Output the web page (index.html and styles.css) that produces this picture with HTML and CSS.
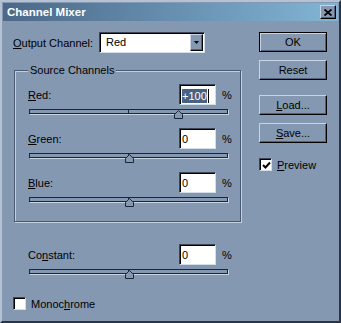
FILE: index.html
```html
<!DOCTYPE html>
<html lang="en">
<head>
    <meta charset="UTF-8">
    <meta name="viewport" content="width=device-width, initial-scale=1.0">
    <title>Channel Mixer</title>
    <link rel="stylesheet" href="styles.css">
</head>
<body>
    <div class="window">
        <div class="titlebar">
            <span class="title">Channel Mixer</span>
            <button class="close">
                <svg width="8" height="7" viewBox="0 0 8 7"><path d="M0.5 0.5 L7.5 6.5 M7.5 0.5 L0.5 6.5" stroke="#000" stroke-width="1.8" fill="none"/></svg>
            </button>
        </div>
        <div class="content">
            <div class="main">
                <div class="output-row">
                    <span class="output-label"><u>O</u>utput Channel:</span>
                    <div class="select">
                        <span class="select-value">Red</span>
                        <span class="select-arrow">
                            <svg width="5" height="3" viewBox="0 0 5 3"><path d="M0 0 H5 L2.5 3 Z" fill="#000"/></svg>
                        </span>
                    </div>
                </div>

                <fieldset class="group">
                    <legend>Source Channels</legend>
                    <div class="channels">
                        <div class="channel">
                            <div class="row">
                                <span class="label"><u>R</u>ed:</span>
                                <span class="num"><span class="selected">+100</span><span class="caret"></span></span>
                                <span class="pct">%</span>
                            </div>
                            <div class="slider">
                                <div class="track"></div>
                                <svg class="thumb" style="left: 75%" width="9" height="9" viewBox="0 0 9 9"><path d="M4.5 0.5 L8.5 4.5 V8.5 H0.5 V4.5 Z" fill="#8598b2" stroke="#1c2634"/></svg>
                            </div>
                        </div>
                        <div class="channel">
                            <div class="row">
                                <span class="label"><u>G</u>reen:</span>
                                <span class="num">0</span>
                                <span class="pct">%</span>
                            </div>
                            <div class="slider">
                                <div class="track"></div>
                                <svg class="thumb" style="left: 50%" width="9" height="9" viewBox="0 0 9 9"><path d="M4.5 0.5 L8.5 4.5 V8.5 H0.5 V4.5 Z" fill="#8598b2" stroke="#1c2634"/></svg>
                            </div>
                        </div>
                        <div class="channel">
                            <div class="row">
                                <span class="label"><u>B</u>lue:</span>
                                <span class="num">0</span>
                                <span class="pct">%</span>
                            </div>
                            <div class="slider">
                                <div class="track"></div>
                                <svg class="thumb" style="left: 50%" width="9" height="9" viewBox="0 0 9 9"><path d="M4.5 0.5 L8.5 4.5 V8.5 H0.5 V4.5 Z" fill="#8598b2" stroke="#1c2634"/></svg>
                            </div>
                        </div>
                    </div>
                </fieldset>

                <div class="channel constant">
                    <div class="row">
                        <span class="label">Co<u>n</u>stant:</span>
                        <span class="num">0</span>
                        <span class="pct">%</span>
                    </div>
                    <div class="slider">
                        <div class="track"></div>
                        <svg class="thumb" style="left: 50%" width="9" height="9" viewBox="0 0 9 9"><path d="M4.5 0.5 L8.5 4.5 V8.5 H0.5 V4.5 Z" fill="#8598b2" stroke="#1c2634"/></svg>
                    </div>
                </div>

                <div class="check mono">
                    <span class="box"></span>
                    <span>Monoc<u>h</u>rome</span>
                </div>
            </div>

            <div class="side">
                <button class="btn default">OK</button>
                <button class="btn reset">Reset</button>
                <button class="btn load"><u>L</u>oad...</button>
                <button class="btn save"><u>S</u>ave...</button>
                <div class="check preview">
                    <span class="box">
                        <svg width="9" height="9" viewBox="0 0 9 9"><path d="M1 4 L3.5 6.5 L8 1.5" stroke="#000" stroke-width="2" fill="none"/></svg>
                    </span>
                    <span><u>P</u>review</span>
                </div>
            </div>
        </div>
    </div>
</body>
</html>
```

FILE: styles.css
```css
body {
    margin: 0;
    font-family: "Liberation Sans", Arial, sans-serif;
    font-size: 11px;
    color: #000;
}
u {
    text-decoration-thickness: 1px;
    text-underline-offset: 1px;
}
.window {
    width: 341px;
    height: 323px;
    box-sizing: border-box;
    border: 2px solid;
    border-color: #b4c2d4 #2a3444 #2a3444 #b4c2d4;
    padding: 1px;
    background-color: #8598b2;
}
.titlebar {
    height: 18px;
    display: flex;
    align-items: center;
    justify-content: space-between;
    padding-left: 4px;
    background: linear-gradient(to right, #4b6888, #82b5d4);
}
.title {
    color: #fff;
    font-weight: bold;
    font-size: 11.5px;
}
.close {
    width: 16px;
    height: 14px;
    margin-right: 2px;
    padding: 0;
    display: flex;
    align-items: center;
    justify-content: center;
    background-color: #8598b2;
    border: 1px solid;
    border-color: #c8d4e2 #000 #000 #c8d4e2;
    box-shadow: inset -1px -1px 0 #52627a;
}
.content {
    display: flex;
    padding: 11px 0 0 10px;
}
.main {
    width: 229px;
}
.output-row {
    display: flex;
    align-items: center;
    height: 21px;
}
.output-label {
    width: 86px;
}
.select, .num, .box {
    box-sizing: border-box;
    background-color: #fff;
    border: 1px solid;
    border-color: #3a4656 #d4dee8 #d4dee8 #3a4656;
    box-shadow: inset 1px 1px 0 #000;
}
.select {
    width: 106px;
    height: 21px;
    display: flex;
    align-items: stretch;
    padding: 1px 1px 1px 1px;
}
.select-value {
    flex: 1;
    padding-left: 5px;
    line-height: 17px;
}
.select-arrow {
    width: 13px;
    box-sizing: border-box;
    display: flex;
    align-items: center;
    justify-content: center;
    background-color: #8598b2;
    border: 1px solid;
    border-color: #c8d4e2 #000 #000 #c8d4e2;
    box-shadow: inset -1px -1px 0 #52627a;
}
.group {
    box-sizing: border-box;
    width: 227px;
    min-width: 0;
    margin: 11px 0 0 1px;
    padding: 7px 9px 13px 13px;
    border: 1px solid #4a5a70;
    box-shadow: inset 1px 1px 0 #c4d0de, 1px 1px 0 #c4d0de;
}
.group legend {
    padding: 0 2px;
    line-height: 13px;
    background-color: #8598b2;
}
.channels {
    display: flex;
    flex-direction: column;
    gap: 8px;
}
.row {
    display: flex;
    align-items: center;
    height: 21px;
}
.label {
    flex: 1;
}
.num {
    width: 37px;
    height: 21px;
    padding: 2px 0 0 2px;
    line-height: 15px;
    display: flex;
    align-items: center;
}
.selected {
    background-color: #4a6282;
    color: #fff;
    line-height: 14px;
}
.caret {
    width: 1px;
    height: 14px;
    margin-left: 1px;
    background-color: #000;
}
.pct {
    width: 9px;
    margin-left: 6px;
}
.slider {
    position: relative;
    width: 199px;
    height: 11px;
    margin: 4px 0 0 1px;
}
.track {
    position: relative;
    height: 5px;
    box-sizing: border-box;
    border: 1px solid #1c2634;
    box-shadow: 1px 1px 0 #c8d4e0;
}
.track::after {
    content: "";
    position: absolute;
    left: 98px;
    top: 0;
    width: 1px;
    height: 3px;
    background-color: #1c2634;
}
.thumb {
    position: absolute;
    top: 1px;
    margin-left: -4px;
}
.constant {
    width: 203px;
    margin: 22px 0 0 15px;
}
.check {
    display: flex;
    align-items: center;
    gap: 5px;
}
.box {
    width: 13px;
    height: 13px;
    display: flex;
    align-items: center;
    justify-content: center;
    padding: 1px 0 0 1px;
}
.mono {
    margin-top: 17px;
}
.side {
    width: 68px;
    margin-left: 17px;
    display: flex;
    flex-direction: column;
}
.btn {
    height: 20px;
    padding: 0;
    font-family: inherit;
    font-size: 11px;
    color: #000;
    background-color: #8598b2;
    border: 1px solid;
    border-color: #c8d4e2 #000 #000 #c8d4e2;
    box-shadow: inset -1px -1px 0 #52627a;
}
.btn.default {
    border-color: #000;
    box-shadow: inset 1px 1px 0 #c8d4e2, inset -1px -1px 0 #52627a;
}
.reset, .save {
    margin-top: 8px;
}
.load {
    margin-top: 15px;
}
.preview {
    margin-top: 15px;
}
```
